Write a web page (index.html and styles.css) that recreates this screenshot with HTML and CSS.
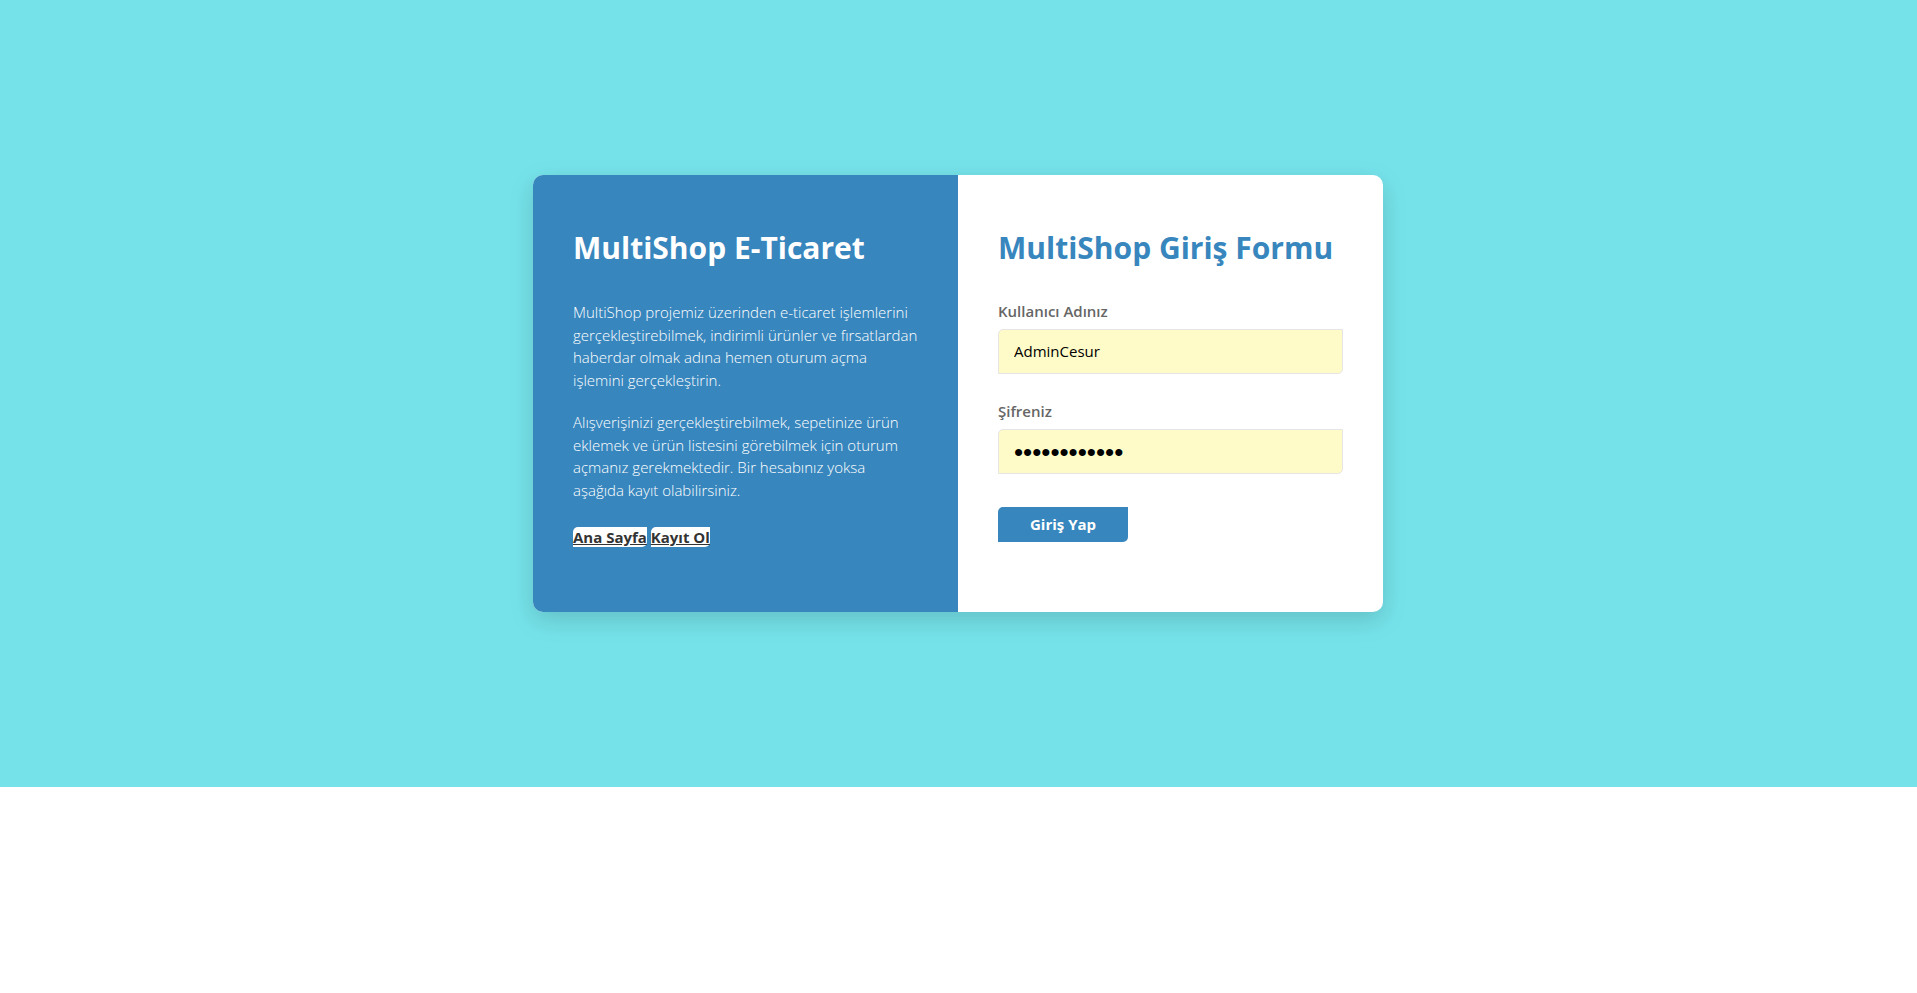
FILE: index.html
```html
<!DOCTYPE html>
<html lang="tr">
<head>
<meta charset="utf-8">
<meta name="viewport" content="width=device-width, initial-scale=1">
<title>MultiShop Giriş</title>
<link rel="stylesheet" href="styles.css">
</head>
<body>
<main class="page">
  <div class="card">
    <section class="intro">
      <h2 class="title">MultiShop E-Ticaret</h2>
      <p class="text">MultiShop projemiz üzerinden e-ticaret işlemlerini gerçekleştirebilmek, indirimli ürünler ve fırsatlardan haberdar olmak adına hemen oturum açma işlemini gerçekleştirin.</p>
      <p class="text">Alışverişinizi gerçekleştirebilmek, sepetinize ürün eklemek ve ürün listesini görebilmek için oturum açmanız gerekmektedir. Bir hesabınız yoksa aşağıda kayıt olabilirsiniz.</p>
      <div class="links">
        <a class="link" href="#">Ana Sayfa</a>
        <a class="link" href="#">Kayıt Ol</a>
      </div>
    </section>
    <form class="login">
      <h2 class="title">MultiShop Giriş Formu</h2>
      <div class="field">
        <label class="label" for="username">Kullanıcı Adınız</label>
        <input class="input" type="text" id="username" value="AdminCesur">
      </div>
      <div class="field">
        <label class="label" for="password">Şifreniz</label>
        <input class="input password" type="password" id="password" value="multishop123">
      </div>
      <button class="submit" type="button">Giriş Yap</button>
    </form>
  </div>
</main>
</body>
</html>
```

FILE: styles.css
```css
* {
  box-sizing: border-box;
}

body {
  margin: 0;
  background: #fff;
  font-family: "Open Sans", sans-serif;
  font-size: 15px;
  line-height: 1.5;
}

.page {
  padding: 175px 21px 175px 20px;
  background: #75e2e9;
}

.card {
  display: flex;
  max-width: 850px;
  margin: 0 auto;
  border-radius: 10px;
  background: #fff;
  box-shadow: 0 8px 24px rgba(0, 0, 0, 0.15);
}

.intro,
.login {
  flex: 1;
  padding: 50px 40px 63px;
}

.intro {
  border-radius: 10px 0 0 10px;
  background: #3786bd;
  color: #fff;
}

.title {
  margin: 0 0 31px;
  font-size: 30px;
  font-weight: 700;
}

.login .title {
  color: #3786bd;
}

.text {
  margin: 0 0 20px;
  font-weight: 300;
}

.links {
  padding-top: 5px;
}

.link {
  border-radius: 5px 0;
  background: #fff;
  color: #333;
  font-weight: 700;
}

.field {
  margin-bottom: 27px;
}

.label {
  display: block;
  margin-bottom: 8px;
  line-height: 20px;
  color: #666;
  font-weight: 600;
}

.input {
  display: block;
  width: 100%;
  height: 45px;
  padding: 0 15px 2px;
  border: 1px solid #e5e5e5;
  border-radius: 5px 0;
  background: #fffbc8;
  color: #000;
  font: inherit;
}

.password {
  padding: 2px 15px 0;
  font-family: "Liberation Sans", sans-serif;
  font-size: 26px;
}

.submit {
  width: 130px;
  height: 35px;
  margin-top: 6px;
  padding: 0 0 2px;
  border: 0;
  border-radius: 5px 0;
  background: #3786bd;
  color: #fff;
  font-family: inherit;
  font-size: 15px;
  font-weight: 700;
}
```
